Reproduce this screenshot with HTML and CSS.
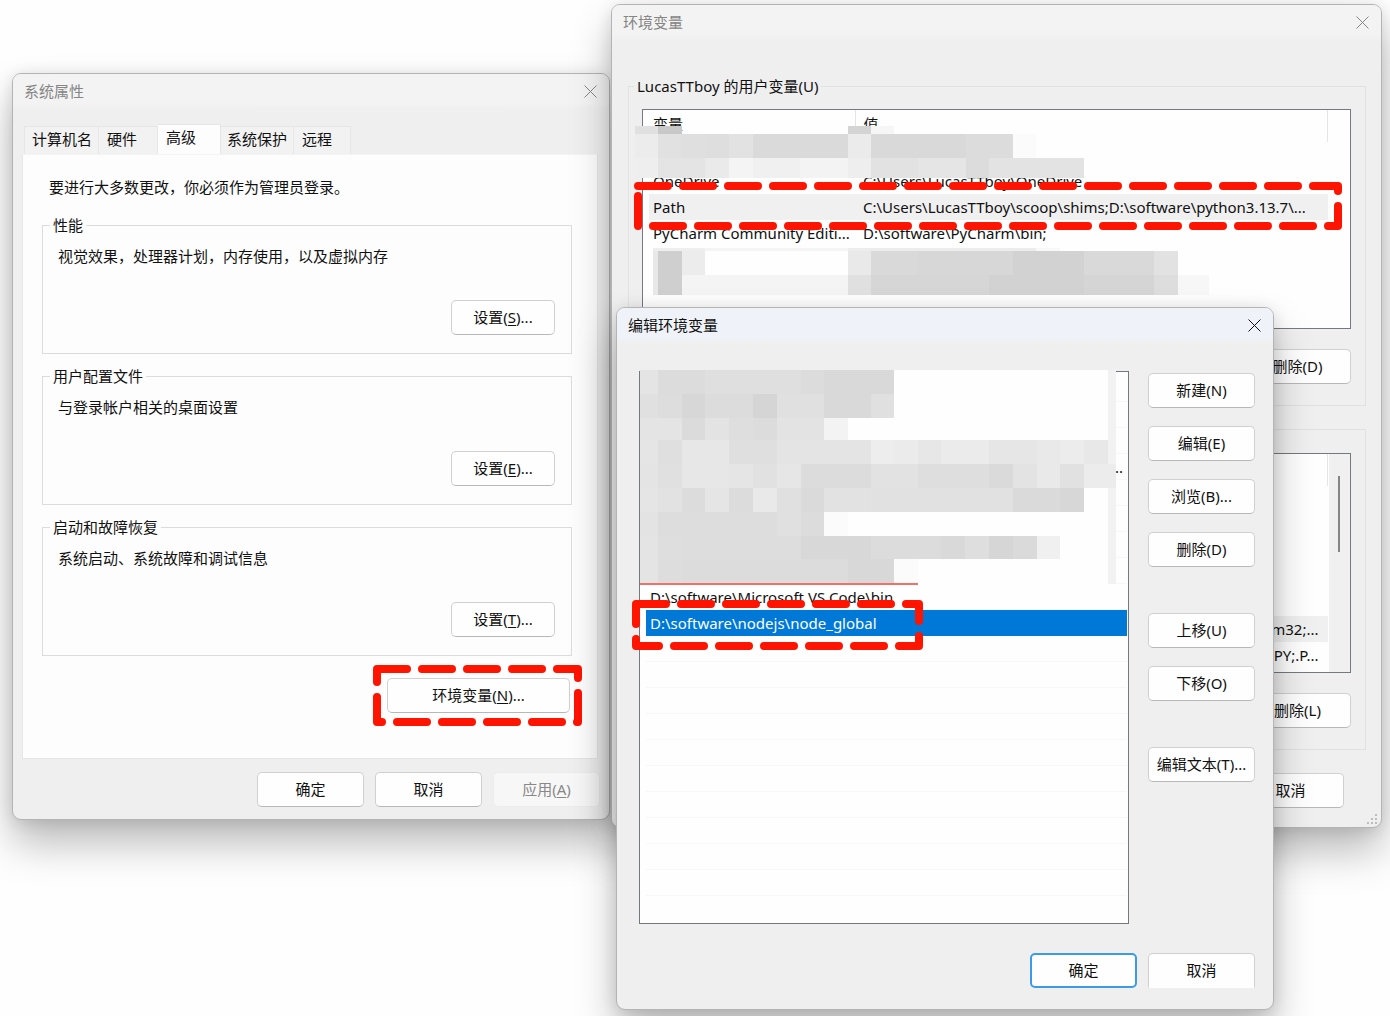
FILE: index.html
```
<!DOCTYPE html>
<html lang="zh-CN">

<head>
  <meta charset="UTF-8">
  <meta name="viewport" content="width=device-width, initial-scale=1.0">
  <title>环境变量</title>
  <link rel="stylesheet" href="styles.css">
</head>

<body>
  <main class="desktop">

    <!-- System properties -->
    <section class="window system-window">
      <header class="title-bar">
        <h2>系统属性</h2>
        <button class="close" aria-label="关闭"><svg viewBox="0 0 13 13"><path d="M0.5 0.5l12 12M12.5 0.5l-12 12"/></svg></button>
      </header>

      <div class="tabs" role="tablist">
        <button class="tab" role="tab">计算机名</button>
        <button class="tab" role="tab">硬件</button>
        <button class="tab active" role="tab" aria-selected="true">高级</button>
        <button class="tab" role="tab">系统保护</button>
        <button class="tab" role="tab">远程</button>
      </div>

      <div class="tab-panel">
        <p class="hint">要进行大多数更改，你必须作为管理员登录。</p>
        <fieldset class="setting">
          <legend>性能</legend>
          <p>视觉效果，处理器计划，内存使用，以及虚拟内存</p>
          <button class="btn">设置(<u>S</u>)...</button>
        </fieldset>
        <fieldset class="setting">
          <legend>用户配置文件</legend>
          <p>与登录帐户相关的桌面设置</p>
          <button class="btn">设置(<u>E</u>)...</button>
        </fieldset>
        <fieldset class="setting">
          <legend>启动和故障恢复</legend>
          <p>系统启动、系统故障和调试信息</p>
          <button class="btn">设置(<u>T</u>)...</button>
        </fieldset>
        <div class="env-button">
          <button class="btn">环境变量(<u>N</u>)...</button>
          <span class="callout"><svg><rect width="100%" height="100%"/></svg></span>
        </div>
      </div>

      <footer class="buttons">
        <button class="btn">确定</button>
        <button class="btn">取消</button>
        <button class="btn" disabled>应用(<u>A</u>)</button>
      </footer>
    </section>

    <!-- Environment variables -->
    <section class="window env-window">
      <header class="title-bar">
        <h2>环境变量</h2>
        <button class="close" aria-label="关闭"><svg viewBox="0 0 13 13"><path d="M0.5 0.5l12 12M12.5 0.5l-12 12"/></svg></button>
      </header>

      <fieldset class="variables">
        <legend>LucasTTboy 的用户变量(U)</legend>
        <div class="list">
          <table>
            <thead>
              <tr><th>变量</th><th>值</th></tr>
            </thead>
            <tbody>
              <tr><td></td><td></td></tr>
              <tr><td>OneDrive</td><td>C:\Users\LucasTTboy\OneDrive</td></tr>
              <tr class="current"><td>Path</td><td>C:\Users\LucasTTboy\scoop\shims;D:\software\python3.13.7\...</td></tr>
              <tr><td>PyCharm Community Editi...</td><td>D:\software\PyCharm\bin;</td></tr>
            </tbody>
          </table>
          <svg class="mosaic user-mosaic" id="user-mosaic" viewBox="635 126 574 169"></svg>
          <span class="callout"><svg><rect width="100%" height="100%"/></svg></span>
        </div>
        <div class="buttons">
          <button class="btn">删除(D)</button>
        </div>
      </fieldset>

      <fieldset class="variables system-variables">
        <div class="list">
          <table>
            <thead>
              <tr><th></th><th></th></tr>
            </thead>
            <tbody>
              <tr><td></td><td></td></tr>
              <tr><td></td><td></td></tr>
              <tr><td></td><td></td></tr>
              <tr><td></td><td></td></tr>
              <tr><td></td><td></td></tr>
              <tr class="current"><td></td><td>m32;...</td></tr>
              <tr><td></td><td>.PY;.P...</td></tr>
            </tbody>
          </table>
          <div class="scrollbar"></div>
        </div>
        <div class="buttons">
          <button class="btn">删除(L)</button>
        </div>
      </fieldset>

      <footer class="buttons">
        <button class="btn">取消</button>
      </footer>
      <svg class="grip" viewBox="0 0 10 10"><path d="M8 0h2v2h-2zM8 4h2v2h-2zM4 4h2v2h-2zM8 8h2v2h-2zM4 8h2v2h-2zM0 8h2v2h-2z"/></svg>
    </section>

    <!-- Edit environment variable -->
    <section class="window edit-window">
      <header class="title-bar">
        <h2>编辑环境变量</h2>
        <button class="close" aria-label="关闭"><svg viewBox="0 0 13 13"><path d="M0.5 0.5l12 12M12.5 0.5l-12 12"/></svg></button>
      </header>

      <div class="editor">
        <div class="list">
          <ul>
            <li></li>
            <li></li>
            <li></li>
            <li class="clipped">...</li>
            <li></li>
            <li></li>
            <li></li>
            <li></li>
            <li>D:\software\Microsoft VS Code\bin</li>
            <li class="selected">D:\software\nodejs\node_global</li>
            <li></li>
            <li></li>
            <li></li>
            <li></li>
            <li></li>
            <li></li>
            <li></li>
            <li></li>
            <li></li>
            <li></li>
          </ul>
          <svg class="mosaic path-mosaic" id="path-mosaic" viewBox="640 370 477 215"></svg>
          <span class="callout"><svg><rect width="100%" height="100%"/></svg></span>
        </div>
        <div class="actions">
          <button class="btn">新建(N)</button>
          <button class="btn">编辑(E)</button>
          <button class="btn">浏览(B)...</button>
          <button class="btn">删除(D)</button>
          <button class="btn group">上移(U)</button>
          <button class="btn">下移(O)</button>
          <button class="btn group">编辑文本(T)...</button>
        </div>
      </div>

      <footer class="buttons">
        <button class="btn default">确定</button>
        <button class="btn fading">取消</button>
      </footer>
    </section>

  </main>

  <script src="mosaic.js"></script>
</body>

</html>
```
FILE: styles.css
```
* {
  margin: 0;
  padding: 0;
  box-sizing: border-box;
}

body {
  background: #fefefe;
  color: #111;
  font-family: "Noto Sans", "Noto Sans CJK SC", sans-serif;
  font-size: 15px;
  line-height: 22px;
}

button {
  font: inherit;
  color: inherit;
}

.desktop {
  display: grid;
  grid-template-columns: 598fr 771fr;
  column-gap: 1px;
  align-items: start;
  min-height: 100vh;
  padding: 4px 8px 0 12px;
  overflow: hidden;
}

/* Windows */
.window {
  position: relative;
  grid-row: 1;
  background: #efefef;
  border: 1px solid #b4b4b4;
  border-radius: 9px;
  box-shadow: 0 24px 40px rgba(0, 0, 0, 0.26), 0 2px 16px rgba(0, 0, 0, 0.12);
}

.system-window {
  grid-column: 1;
  margin-top: 69px;
}

.env-window {
  grid-column: 2;
}

.edit-window {
  grid-column: 2;
  margin: 303px 108px 0 5px;
}

.title-bar {
  display: flex;
  justify-content: space-between;
  align-items: center;
  height: 36px;
  padding: 0 12px 2px 11px;
  border-radius: 8px 8px 0 0;
  background: linear-gradient(#f3f3f3 80%, #efefef);
  color: #858585;
}

.title-bar h2 {
  font-size: 15px;
  font-weight: 400;
}

.edit-window .title-bar {
  background: linear-gradient(#eff3f9 80%, #efefef);
  color: #111;
}

.close {
  display: flex;
  border: none;
  background: none;
}

.close svg {
  width: 13px;
  height: 13px;
  fill: none;
  stroke: currentColor;
}

/* Buttons */
.btn {
  width: 107px;
  height: 35px;
  padding-bottom: 2px;
  border: 1px solid #d0d0d0;
  border-bottom-color: #b8b8b8;
  border-radius: 5px;
  background: #fefefe;
  white-space: nowrap;
}

.btn:disabled {
  background: #f7f7f7;
  border-color: #ececec;
  color: #888;
}

.btn.default {
  border: 2px solid #3c9be8;
}

.btn.fading {
  border-bottom-color: transparent;
  border-radius: 5px 5px 0 0;
}

.btn u {
  text-underline-offset: 2px;
}

.buttons {
  display: flex;
  justify-content: flex-end;
  gap: 11px;
}

/* Tabs */
.tabs {
  display: flex;
  align-items: flex-end;
  padding: 14px 11px 0;
}

.tab {
  height: 28px;
  padding: 0 8px 4px;
  border: 1px solid #e6e6e6;
  border-width: 1px 1px 0 0;
  background: #f2f2f2;
  text-align: left;
  white-space: nowrap;
}

.tab:nth-child(1) {
  width: 75px;
  padding: 0 7px 4px;
  border-left-width: 1px;
}

.tab:nth-child(2) {
  width: 59px;
}

.tab:nth-child(4) {
  width: 73px;
  padding: 0 6px 4px;
}

.tab:nth-child(5) {
  width: 57px;
}

.tab.active {
  width: 63px;
  height: 30px;
  padding-bottom: 6px;
  background: #fdfdfd;
}

.tab-panel {
  margin: 0 11px 0 9px;
  padding: 21px 25px 45px 19px;
  border: 1px solid #e6e6e6;
  border-top-color: #f4f4f4;
  background: #fdfdfd;
}

.hint {
  padding-left: 7px;
  margin-bottom: 16px;
}

fieldset {
  border: 1px solid #dcdcdc;
}

legend {
  margin-left: -8px;
  padding: 0 3px;
}

.setting {
  display: flex;
  flex-direction: column;
  gap: 33px;
  margin-bottom: 11px;
  padding: 9px 16px 18px 15px;
}

.setting .btn {
  align-self: flex-end;
  width: 104px;
}

.env-button {
  position: relative;
  width: 183px;
  margin: 22px 2px 0 auto;
}

.env-button .btn {
  display: block;
  width: 100%;
}

.system-window .buttons {
  padding: 13px 9px 12px;
}

/* Variable lists */
.list {
  position: relative;
  border: 1px solid #75797d;
  background: #fefefe;
}

.variables {
  margin: 34px 15px 0 16px;
  padding: 12px 14px 21px 13px;
  border-color: #e1e1e1;
}

.variables .list {
  height: 220px;
  margin-bottom: 20px;
  padding: 0 22px 0 6px;
}

.system-variables {
  margin-top: 23px;
  padding-top: 23px;
}

table {
  width: 100%;
  table-layout: fixed;
  border-collapse: collapse;
}

th,
td {
  height: 26px;
  padding-left: 8px;
  font-weight: 400;
  text-align: left;
  white-space: nowrap;
}

th {
  height: 32px;
  padding-bottom: 4px;
  border-right: 1px solid #e5e5e5;
}

th:first-child,
td:first-child {
  width: 206px;
  padding-left: 4px;
}

.current {
  background: #f0f0f0;
}

.system-variables td {
  padding-right: 9px;
  text-align: right;
}

.scrollbar {
  position: absolute;
  top: 0;
  right: 0;
  bottom: 0;
  width: 21px;
  padding: 22px 10px 0 9px;
  background: #f0f0f0;
}

.scrollbar::before {
  content: "";
  display: block;
  height: 76px;
  background: #858585;
}

.env-window > .buttons {
  padding: 23px 37px 19px;
}

.grip {
  position: absolute;
  right: 4px;
  bottom: 3px;
  width: 10px;
  height: 10px;
  fill: #bdbdbd;
}

/* Path editor */
.editor {
  display: grid;
  grid-template-columns: 1fr 107px;
  gap: 19px;
  padding: 27px 18px 0 22px;
}

.editor ul {
  padding: 4px 1px 27px 6px;
  list-style: none;
}

.editor li {
  height: 26px;
  padding: 0 4px;
  border-bottom: 1px solid #f7f7f7;
  line-height: 26px;
}

.editor .clipped {
  text-align: right;
}

.editor .selected {
  background: #0078d7;
  border-color: #0078d7;
  color: #fff;
}

.actions {
  display: flex;
  flex-direction: column;
  gap: 18px;
  padding-top: 2px;
}

.actions .group {
  margin-top: 28px;
}

.edit-window > .buttons {
  padding: 29px 18px 21px;
}

/* Blurred-out entries and red markers */
.mosaic {
  position: absolute;
  shape-rendering: crispEdges;
}

.user-mosaic {
  top: 16px;
  left: -8px;
  width: 574px;
  height: 169px;
}

.path-mosaic {
  top: -2px;
  left: 0;
  width: 477px;
  height: 215px;
}

.callout {
  position: absolute;
  pointer-events: none;
}

.callout svg {
  display: block;
  width: 100%;
  height: 100%;
  overflow: visible;
  fill: none;
  stroke: #ff1400;
  stroke-width: 8px;
  stroke-dasharray: 30 15;
  stroke-linecap: round;
  stroke-linejoin: round;
}

.env-button .callout {
  inset: -9px -8px -9px -10px;
}

.variables .callout {
  top: 76px;
  left: -5px;
  right: 12px;
  height: 40px;
}

.editor .callout {
  top: 232px;
  left: -4px;
  width: 283px;
  height: 42px;
}
```
FILE: mosaic.js
```
// Each row: top, bottom, runs of "x grey" (the last x closes the row)
const userRows = [
  [126, 134, "635 e0,658 c8,682 -,848 d4,871 f6,894"],
  [134, 158, "635 ec,658 e1,681 df,705 de,729 e2,753 da,848 eb,871 d9,966 dc,1013 fb,1036"],
  [158, 178, "635 ee,658 e4,705 ea,729 f4,753 f0,800 f3,848 ee,871 e2,918 e5,966 dc,989 e3,1084"],
  [248, 251, "653 ee,705 f4,848 ec,1036 f8,1060"],
  [251, 275, "653 e8,658 cf,682 ec,705 fe,848 e9,871 d9,918 d7,1013 d2,1084 d9,1154 e2,1178"],
  [275, 295, "653 e8,658 cf,682 f4,848 e0,871 d6,989 d2,1084 d5,1154 dd,1178 f7,1209"]
];

const pathRows = [
  [370, 394, "640 e4,658 dc,705 df,801 dc,824 d9,894 fe,1108 f2,1116"],
  [394, 418, "640 e0,658 dd,682 d7,705 dc,753 d5,777 e0,824 d9,871 e0,894 fe,1108 f2,1116"],
  [418, 440, "640 e4,682 db,705 e3,729 de,753 dc,777 e3,824 f3,848 fe,1108 f2,1116"],
  [440, 464, "640 e5,658 df,682 e7,729 df,777 e4,871 ed,894 eb,918 e7,941 eb,989 e6,1037 e9,1060 ec,1084 e8,1108 f2,1116"],
  [464, 488, "640 e4,658 e0,682 e7,729 e5,753 e1,777 e6,801 dc,871 e2,918 de,989 da,1013 e3,1037 e9,1060 e1,1084 ec,1116"],
  [488, 512, "640 e5,658 e2,682 dc,705 e5,729 dc,753 e9,777 e0,801 da,824 e2,871 e1,1013 da,1060 d7,1084 fe,1108 f2,1116"],
  [512, 536, "640 e3,658 dd,777 e0,801 dc,824 fb,848 fe,1108 f2,1116"],
  [536, 559, "640 e4,658 de,682 dd,801 d8,871 dc,941 d9,965 de,989 d6,1013 da,1037 f0,1060 fe,1108 f2,1116"],
  [559, 584, "640 e4,658 dd,682 dc,848 d8,894 fb,918 fe,1108 f2,1116"]
];

function addRect(svg, x, y, width, height, fill) {
  const rect = document.createElementNS("http://www.w3.org/2000/svg", "rect");
  Object.entries({ x, y, width, height, fill }).forEach(([name, value]) => rect.setAttribute(name, value));
  svg.appendChild(rect);
}

function drawMosaic(id, rows) {
  const svg = document.getElementById(id);
  rows.forEach(([top, bottom, runs]) => {
    const cells = runs.split(",").map(run => run.split(" "));
    for (let i = 0; i < cells.length - 1; i++) {
      const [x, grey] = cells[i];
      if (grey === "-") continue;
      addRect(svg, x, top, cells[i + 1][0] - x, bottom - top, `#${grey}${grey}${grey}`);
    }
  });
}

drawMosaic("user-mosaic", userRows);
drawMosaic("path-mosaic", pathRows);
addRect(document.getElementById("path-mosaic"), 640, 583, 278, 2, "#f0706a");
```
